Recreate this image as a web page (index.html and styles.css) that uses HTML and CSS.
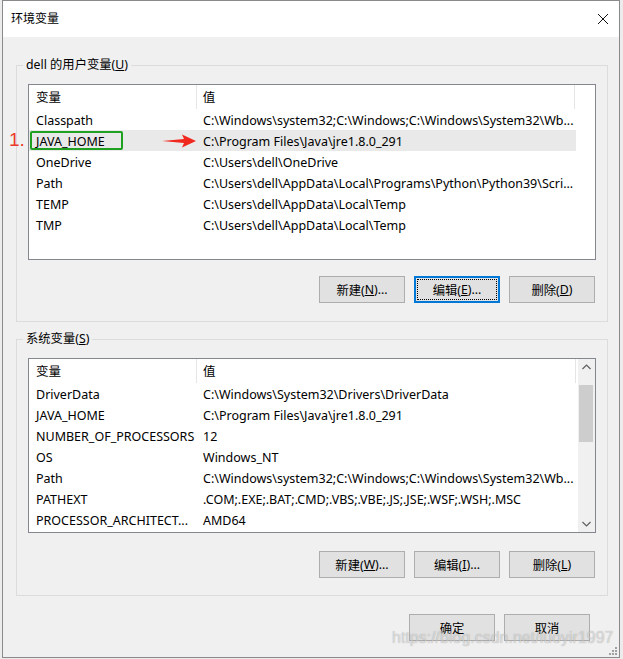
FILE: index.html
```html
<!DOCTYPE html>
<html lang="zh-CN">
<head>
<meta charset="utf-8">
<title>环境变量</title>
<link rel="stylesheet" href="styles.css">
</head>
<body>
<div class="window">
  <div class="titlebar">
    <span class="title">环境变量</span>
    <svg class="close" width="12" height="12" viewBox="0 0 12 12"><path d="M1 1 L11 11 M11 1 L1 11" stroke="#111" stroke-width="1" fill="none"/></svg>
  </div>
  <div class="client">
    <div class="group">
      <span class="caption">dell 的用户变量(<u>U</u>)</span>
      <div class="list">
        <div class="row head"><span class="c1">变量</span><span class="c2">值</span><span class="c3"></span></div>
        <div class="row"><span class="c1">Classpath</span><span class="c2">C:\Windows\system32;C:\Windows;C:\Windows\System32\Wb...</span></div>
        <div class="row sel"><span class="c1">JAVA_HOME</span><span class="c2">C:\Program Files\Java\jre1.8.0_291</span></div>
        <div class="row"><span class="c1">OneDrive</span><span class="c2">C:\Users\dell\OneDrive</span></div>
        <div class="row"><span class="c1">Path</span><span class="c2">C:\Users\dell\AppData\Local\Programs\Python\Python39\Scri...</span></div>
        <div class="row"><span class="c1">TEMP</span><span class="c2">C:\Users\dell\AppData\Local\Temp</span></div>
        <div class="row"><span class="c1">TMP</span><span class="c2">C:\Users\dell\AppData\Local\Temp</span></div>
      </div>
      <div class="buttons">
        <button class="btn">新建(<u>N</u>)...</button>
        <button class="btn focus"><span class="inner">编辑(<u>E</u>)...</span></button>
        <button class="btn">删除(<u>D</u>)</button>
      </div>
    </div>
    <div class="group second">
      <span class="caption">系统变量(<u>S</u>)</span>
      <div class="list short">
        <div class="rows">
          <div class="row head"><span class="c1">变量</span><span class="c2">值</span></div>
          <div class="row"><span class="c1">DriverData</span><span class="c2">C:\Windows\System32\Drivers\DriverData</span></div>
          <div class="row"><span class="c1">JAVA_HOME</span><span class="c2">C:\Program Files\Java\jre1.8.0_291</span></div>
          <div class="row"><span class="c1">NUMBER_OF_PROCESSORS</span><span class="c2">12</span></div>
          <div class="row"><span class="c1">OS</span><span class="c2">Windows_NT</span></div>
          <div class="row"><span class="c1">Path</span><span class="c2">C:\Windows\system32;C:\Windows;C:\Windows\System32\Wb...</span></div>
          <div class="row"><span class="c1">PATHEXT</span><span class="c2">.COM;.EXE;.BAT;.CMD;.VBS;.VBE;.JS;.JSE;.WSF;.WSH;.MSC</span></div>
          <div class="row"><span class="c1">PROCESSOR_ARCHITECT...</span><span class="c2">AMD64</span></div>
        </div>
        <div class="scrollbar">
          <svg class="arrow" width="17" height="17" viewBox="0 0 17 17"><path d="M4.5 10 L8.5 6 L12.5 10" stroke="#606060" stroke-width="1.2" fill="none"/></svg>
          <div class="track"><div class="thumb"></div></div>
          <svg class="arrow" width="17" height="17" viewBox="0 0 17 17"><path d="M4.5 7 L8.5 11 L12.5 7" stroke="#606060" stroke-width="1.2" fill="none"/></svg>
        </div>
      </div>
      <div class="buttons">
        <button class="btn">新建(<u>W</u>)...</button>
        <button class="btn">编辑(<u>I</u>)...</button>
        <button class="btn">删除(<u>L</u>)</button>
      </div>
    </div>
    <div class="buttons footer">
      <button class="btn">确定</button>
      <button class="btn">取消</button>
    </div>
  </div>
  <span class="mark-num">1.</span>
  <div class="mark-box"></div>
  <svg class="mark-arrow" width="34" height="14" viewBox="0 0 34 14"><path d="M0 7 L22 5 L20 0.5 L34 7 L20 13.5 L22 9 Z" fill="#f0281e"/></svg>
  <span class="watermark">https://blog.csdn.net/luoyir1997</span>
  <svg class="grip" width="10" height="10" viewBox="0 0 10 10" fill="#a0a0a0"><rect x="7" y="1" width="2" height="2"/><rect x="4" y="4" width="2" height="2"/><rect x="7" y="4" width="2" height="2"/><rect x="1" y="7" width="2" height="2"/><rect x="4" y="7" width="2" height="2"/><rect x="7" y="7" width="2" height="2"/></svg>
</div>
</body>
</html>
```
FILE: styles.css
```css
* { box-sizing: border-box; }
html, body { margin: 0; padding: 0; }
body {
  background: #ececec;
  font-family: "Noto Sans", "Noto Sans CJK SC", sans-serif;
  font-size: 12px;
  color: #000;
  width: 623px;
  height: 659px;
  overflow: hidden;
}
.window {
  position: relative;
  margin-left: 2px;
  width: 618px;
  height: 658px;
  border: 1px solid #8a8a8a;
  background: #f0f0f0;
}
.titlebar {
  height: 36px;
  background: #fff;
  display: flex;
  align-items: center;
  justify-content: space-between;
  padding: 0 10px 0 8px;
}
.title { font-size: 12px; line-height: 16px; }
.close { display: block; }
.client {
  padding: 28px 11px 0 13px;
}
.group {
  position: relative;
  border: 1px solid #dcdcdc;
  padding: 18px 11px 18px 11px;
}
.group.second { margin-top: 17px; padding-bottom: 17px; }
.caption {
  position: absolute;
  top: -9px;
  left: 6px;
  padding: 0 3px;
  background: #f0f0f0;
  line-height: 16px;
  font-size: 12.3px;
}
.list {
  height: 176px;
  border: 1px solid #828790;
  background: #fff;
  overflow: hidden;
  font-size: 12.5px;
}
.list.short { height: 175px; display: flex; }
.rows { flex: 1; }
.row {
  display: flex;
  height: 21px;
  align-items: center;
  white-space: nowrap;
  width: 547px;
}
.row.head { height: 24px; }
.row.sel { background: #e9e9e9; }
.c1, .c2 {
  padding-top: 2px;
  overflow: hidden;
}
.c1 {
  width: 168px;
  padding-left: 7px;
}
.c2 {
  width: 379px;
  padding-left: 6px;
}
.head .c1, .head .c2 {
  height: 24px;
  line-height: 22px;
  border-right: 1px solid #e5e5e5;
}
.head .c3 { width: 1px; }
.scrollbar {
  width: 17px;
  display: flex;
  flex-direction: column;
  background: #f0f0f0;
}
.arrow { display: block; flex: none; }
.track { flex: 1; padding: 9px 2px 0 1px; }
.thumb { height: 57px; background: #cdcdcd; }
.buttons {
  display: flex;
  justify-content: flex-end;
  gap: 9px;
  margin-top: 16px;
  padding-right: 1px;
}
.second .buttons { margin-top: 18px; }
.buttons.footer { margin-top: 18px; padding-right: 18px; }
.btn {
  width: 86px;
  height: 27px;
  border: 1px solid #adadad;
  background: #e1e1e1;
  font-family: inherit;
  font-size: 12.3px;
  color: #000;
  padding: 0;
  display: flex;
  align-items: center;
  justify-content: center;
}
.btn.focus {
  border: 2px solid #0078d7;
  padding: 1px;
}
.btn .inner {
  width: 100%;
  height: 100%;
  border: 1px dotted #000;
  display: flex;
  align-items: center;
  justify-content: center;
}
.mark-num {
  position: absolute;
  left: 6px;
  top: 127px;
  font-family: "Liberation Sans", sans-serif;
  font-size: 19px;
  line-height: 24px;
  color: #ec3a2a;
}
.mark-box {
  position: absolute;
  left: 27px;
  top: 130px;
  width: 93px;
  height: 19px;
  border: 2px solid #20a020;
  border-radius: 2px;
}
.mark-arrow {
  position: absolute;
  left: 159px;
  top: 133px;
}
.watermark {
  position: absolute;
  left: 389px;
  top: 628px;
  font-family: "Liberation Sans", sans-serif;
  font-size: 16px;
  color: rgba(255, 255, 255, 0.55);
  text-shadow: 0 0 1px rgba(0, 0, 0, 0.35);
  white-space: nowrap;
}
.grip {
  position: absolute;
  right: 1px;
  bottom: 1px;
}
```
